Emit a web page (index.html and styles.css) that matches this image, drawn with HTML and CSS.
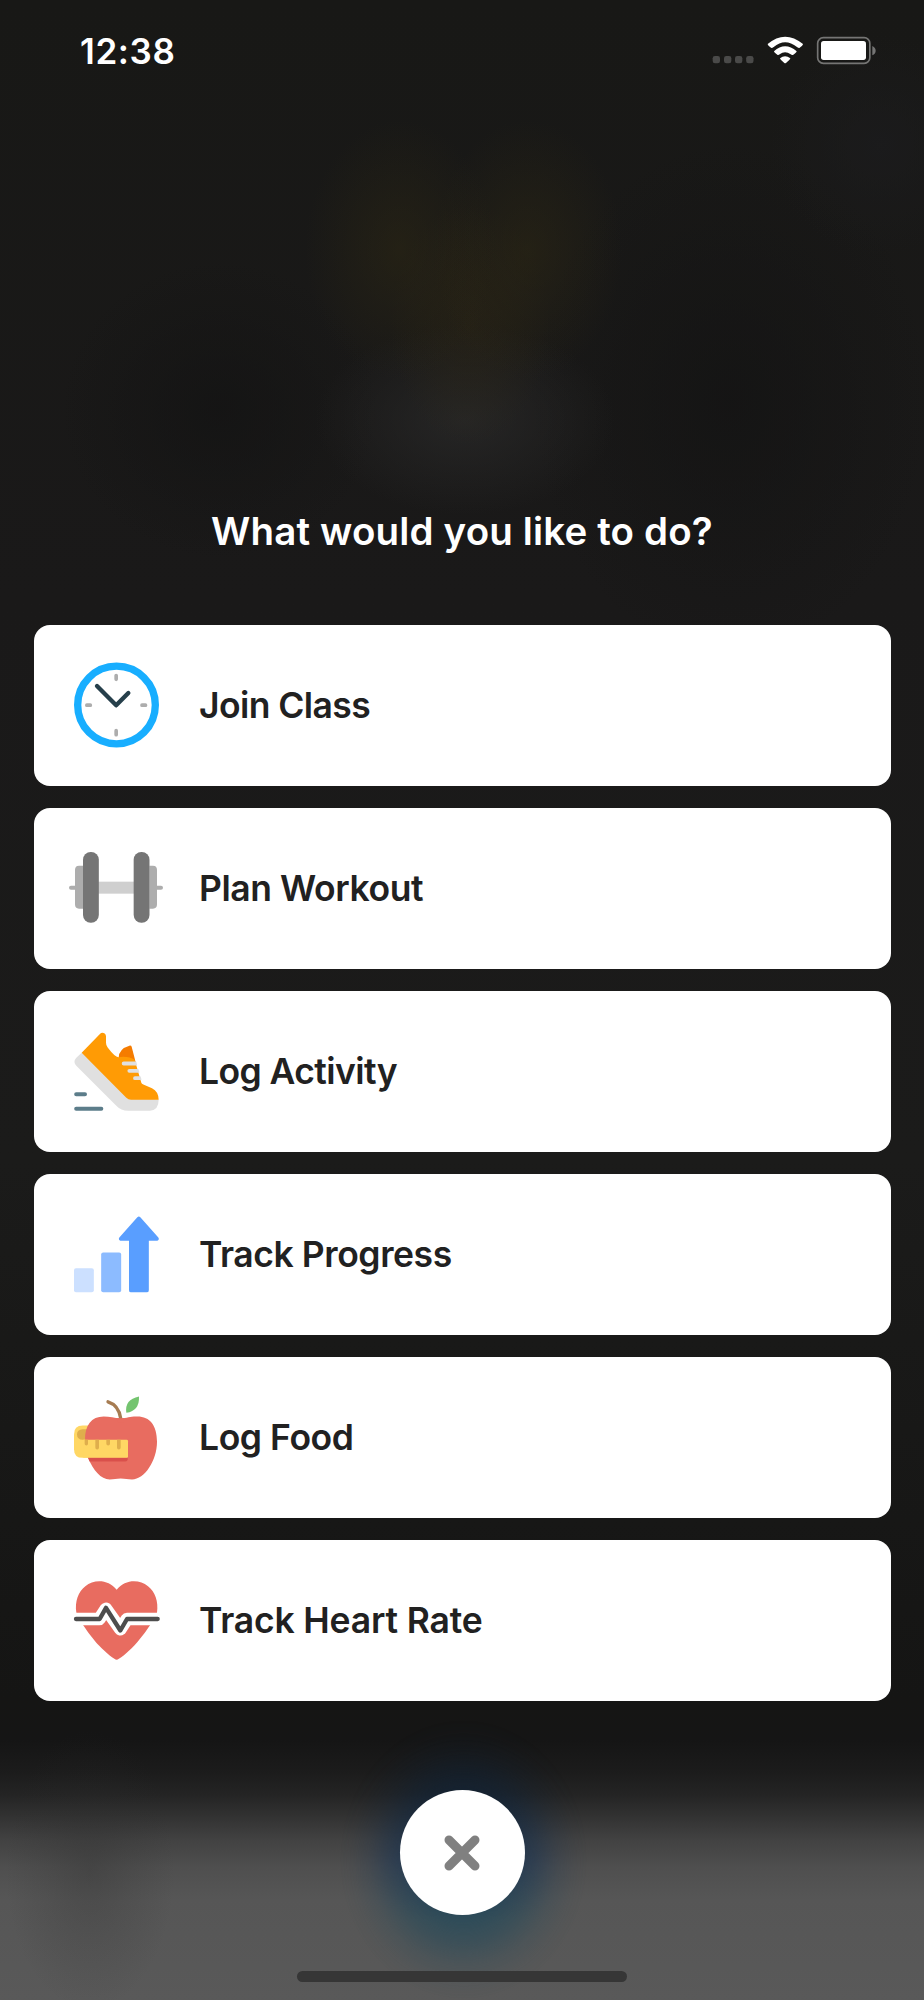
FILE: index.html
```html
<!DOCTYPE html>
<html lang="en">
<head>
<meta charset="utf-8">
<title>What would you like to do?</title>
<link rel="stylesheet" href="styles.css">
</head>
<body>
<main class="screen">
  <header class="status">
    <span class="time">12:38</span>
    <svg class="indicators" viewBox="66 45 495 90" aria-hidden="true">
      <g fill="#4a4a49">
        <rect x="68" y="108" width="22" height="22" rx="7"/>
        <rect x="102" y="108" width="22" height="22" rx="7"/>
        <rect x="135" y="108" width="22" height="22" rx="7"/>
        <rect x="168.500" y="108" width="22" height="22" rx="7"/>
      </g>
      <g fill="#fff">
        <path d="M233 72Q285 28 339 72Q339 76 328 84Q324 84 321 81Q285 53 251 81Q248 84 244 84Q233 76 233 72Z"/>
        <path d="M252 94Q285 64 320 94Q320 98 309 105Q305 106 302 103Q285 90 269 103Q266 106 263 105Q252 98 252 94Z"/>
        <path d="M270 115Q285 102 301 115Q301 118 288 129Q285 131 283 129Q270 118 270 115Z"/>
        <rect x="393" y="63" width="135" height="57" rx="8"/>
      </g>
      <rect x="383" y="53" width="156.500" height="77" rx="17" fill="none" stroke="#757574" stroke-width="5"/>
      <path d="M547 78Q557 83 557 92Q557 101 547 106Z" fill="#757574"/>
    </svg>
  </header>

  <h1 class="title">What would you like to do?</h1>

  <nav class="actions">
    <button class="card">
      <svg class="icon" viewBox="114 112 288 288" aria-hidden="true">
        <circle cx="259.500" cy="256" r="116.500" fill="none" stroke="#18aeff" stroke-width="22"/>
        <g stroke="#adadad" stroke-width="11" stroke-linecap="round">
          <path d="M258.500 167.500V179M258.500 333V345M170.500 256.500H181M336 256.500H346.500"/>
        </g>
        <path d="M201 199L258.500 257L295 220" fill="none" stroke="#263f4b" stroke-width="13" stroke-linecap="round" stroke-linejoin="round"/>
      </svg>
      <span class="label tight">Join Class</span>
    </button>
    <button class="card">
      <svg class="icon" viewBox="114 121 288 288" aria-hidden="true">
        <rect x="200" y="246" width="116" height="36" fill="#cfcfcf"/>
        <path d="M123 264H140M377 264H393" stroke="#adadad" stroke-width="12" stroke-linecap="round"/>
        <path d="M159 198H147Q135 198 135 211V314Q135 327 147 327H159ZM358 198H369Q381 198 381 211V314Q381 327 369 327H358Z" fill="#adadad"/>
        <rect x="159" y="157" width="47.500" height="212" rx="23" fill="#757575"/>
        <rect x="311" y="157" width="47.500" height="212" rx="23" fill="#757575"/>
      </svg>
      <span class="label">Plan Workout</span>
    </button>
    <button class="card">
      <svg class="icon" viewBox="114 115.500 288 288" aria-hidden="true">
        <path d="M155 202L139 217Q128 229 139 241L259 361Q273 376 294 376H360Q386 374 386 343L300 330Z" fill="#e0e0e0"/>
        <path d="M266 217Q266 190 300 180Q304 180 305 184L317 230H272Z" fill="#f57c00"/>
        <path d="M155 202L209 146Q216 139 224 144Q228 147 228 153V172Q228 180 233 186Q255 215 265 215Q296 211 314 223L334 292Q335 295 340 297L366 308Q386 318 386 343H303Q295 343 289 337Z" fill="#ff9b05"/>
        <path d="M281 234H319M298 256H325M315 278H331" stroke="#e0e0e0" stroke-width="11.500" stroke-linecap="round"/>
        <path d="M317 223L337 290H348L334 223Z" fill="#fff"/>
        <path d="M138.500 326.500H165M138.500 370H214" stroke="#5c7d8a" stroke-width="12" stroke-linecap="round"/>
      </svg>
      <span class="label tight">Log Activity</span>
    </button>
    <button class="card">
      <svg class="icon" viewBox="114 109.500 288 288" aria-hidden="true">
        <rect x="132" y="293.500" width="59.500" height="72" rx="6" fill="#cce0ff"/>
        <rect x="213.500" y="246" width="60" height="119.500" rx="6" fill="#8cbbff"/>
        <path d="M322 140Q326.500 136 331 140L385 201Q389 208 382 210.500H356.500V359Q356.500 365.500 350 365.500H303Q297 365.500 297 359V210.500H271Q264 208 268 201Z" fill="#599eff"/>
      </svg>
      <span class="label">Track Progress</span>
    </button>
    <button class="card">
      <svg class="icon" viewBox="114 118.500 288 288" aria-hidden="true">
        <path d="M180 225H158Q132 225 132 251V296Q132 322 158 322H190Z" fill="#ffd764"/>
        <path d="M180 236H158Q141 237 141 251Q141 267 158 268H180Z" fill="#dfae4c"/>
        <path d="M165 268C165 224 184 198 221 198C240 198 252 203 272 203C292 203 302 197 322 198C360 198 381 225 381 274C381 330 344 387 306 387C293 387 286 384 272 384C258 384 253 387 239 387C213 387 190 360 174 322Z" fill="#e86c60"/>
        <path d="M174 322H293V326Q293 333 286 333H179Z" fill="#d9504b"/>
        <path d="M160 268H290Q294 268 294 272V318Q294 322 290 322H160Z" fill="#ffd764"/>
        <path d="M164 268H174V280Q174 285 169 285Q164 285 164 280ZM196 268H207V291Q207 297 201.500 297Q196 297 196 291ZM229 268H240V280Q240 285 234.500 285Q229 285 229 280ZM261 268H272V291Q272 297 266.500 297Q261 297 261 291Z" fill="#dfae4c"/>
        <path d="M234 154Q266 164 272 203" fill="none" stroke="#a67c52" stroke-width="10" stroke-linecap="round"/>
        <rect x="262" y="203" width="20" height="12" fill="#e86c60"/>
        <path d="M327 138Q329 181 289 187Q283 147 327 138Z" fill="#74c46f"/>
      </svg>
      <span class="label">Log Food</span>
    </button>
    <button class="card">
      <svg class="icon" viewBox="114 112.500 288 288" aria-hidden="true">
        <path d="M260 163C285 131 328 131 354 152C375 168 386 197 381 231C376 250 339 302 313 330C292 352 266 373 260 373C254 373 228 352 207 330C181 302 144 250 139 231C134 197 145 168 166 152C192 131 235 131 260 163Z" fill="#e86c60"/>
        <path d="M120 250.500H208L228 220L271 281L291 250.500H400" fill="none" stroke="#fff" stroke-width="38" stroke-linejoin="round"/>
        <path d="M138 250.500H209L228 217L271 285L291 250.500H383" fill="none" stroke="#4d4d4d" stroke-width="13" stroke-linecap="round" stroke-linejoin="round"/>
      </svg>
      <span class="label wide">Track Heart Rate</span>
    </button>
  </nav>

  <footer class="footer">
    <button class="close" aria-label="Close">
      <svg class="cross" viewBox="0 0 36 36" aria-hidden="true">
        <path d="M5 5L31 31M31 5L5 31" stroke="#808080" stroke-width="9" stroke-linecap="round"/>
      </svg>
    </button>
    <div class="home"></div>
  </footer>
</main>
</body>
</html>
```
FILE: styles.css
```css
* { box-sizing: border-box; }
body { margin: 0; background: #181816; }

.screen {
  position: relative;
  z-index: 0;
  display: flex;
  flex-direction: column;
  width: 924px;
  height: 2000px;
  overflow: hidden;
  font-family: Inter, "Liberation Sans", sans-serif;
  background:
    radial-gradient(ellipse 95px 130px at 400px 250px, rgba(54, 46, 18, .38), transparent),
    radial-gradient(ellipse 95px 130px at 528px 250px, rgba(54, 46, 18, .38), transparent),
    radial-gradient(ellipse 80px 120px at 470px 325px, rgba(50, 42, 20, .42), transparent),
    radial-gradient(ellipse 150px 95px at 465px 420px, rgba(46, 46, 46, .6), transparent),
    radial-gradient(ellipse 110px 110px at 880px 145px, rgba(28, 28, 30, .7), transparent),
    radial-gradient(ellipse 200px 260px at 730px 400px, rgba(19, 19, 19, .7), transparent),
    radial-gradient(ellipse 160px 150px at 220px 410px, rgba(19, 19, 19, .7), transparent),
    radial-gradient(ellipse 85px 140px at 90px 1870px, rgba(44, 44, 44, .3), rgba(44, 44, 44, .14) 50%, transparent),
    linear-gradient(#181816 0, #1a1919 600px, #1b1b1a 1160px, #151514 1700px, #151515 1740px, #1b1b1b 1770px, #242424 1795px, #333 1818px, #424242 1840px, #4f4f4f 1868px, #565656 1900px, #595959 2000px);
}

.status {
  display: flex;
  justify-content: space-between;
  align-items: flex-start;
  height: 112px;
  padding: 35px 47px 0 80px;
}
.time {
  font-size: 35px;
  line-height: 32px;
  letter-spacing: .6px;
  font-weight: 600;
  color: #fff;
}
.indicators { width: 165px; height: 30px; }

.title {
  margin: 394px 0 0;
  height: 119px;
  font-size: 38.500px;
  line-height: 50px;
  letter-spacing: .15px;
  font-weight: 600;
  text-align: center;
  color: #fff;
}

.actions {
  display: flex;
  flex-direction: column;
  gap: 22.400px;
  padding: 0 33.500px;
}
.card {
  display: flex;
  align-items: center;
  gap: 35px;
  height: 160.700px;
  padding: 0 34.500px;
  border: 0;
  border-radius: 16px;
  background: #fff;
  font: inherit;
}
.icon { width: 96px; height: 96px; flex: none; }
.label {
  padding-top: 1px;
  font-size: 35.500px;
  line-height: 44px;
  letter-spacing: -.43px;
  font-weight: 600;
  color: #212121;
  white-space: nowrap;
}
.label.tight { letter-spacing: -.58px; }
.label.wide { letter-spacing: -.18px; }

.footer {
  display: flex;
  flex-direction: column;
  align-items: center;
  padding-top: 89px;
}
.close {
  position: relative;
  display: flex;
  align-items: center;
  justify-content: center;
  width: 125px;
  height: 125px;
  padding: 0;
  border: 0;
  border-radius: 50%;
  background: #fff;
}
/* soft blue halo behind the button */
.close::before {
  content: "";
  position: absolute;
  inset: -70px -62px -84px -60px;
  z-index: -1;
  background: linear-gradient(#0e2238 0, #0e2238 70px, #163253 140px, #1f485a 200px, #1f485a 100%);
  -webkit-mask-image: radial-gradient(closest-side, rgba(0, 0, 0, .75) 40%, rgba(0, 0, 0, .5) 58%, rgba(0, 0, 0, .2) 76%, rgba(0, 0, 0, .05) 90%, transparent);
  mask-image: radial-gradient(closest-side, rgba(0, 0, 0, .75) 40%, rgba(0, 0, 0, .5) 58%, rgba(0, 0, 0, .2) 76%, rgba(0, 0, 0, .05) 90%, transparent);
}
.cross { width: 36px; height: 36px; }
.home {
  width: 330px;
  height: 11px;
  margin-top: 56px;
  border-radius: 6px;
  background: #363636;
}
```
